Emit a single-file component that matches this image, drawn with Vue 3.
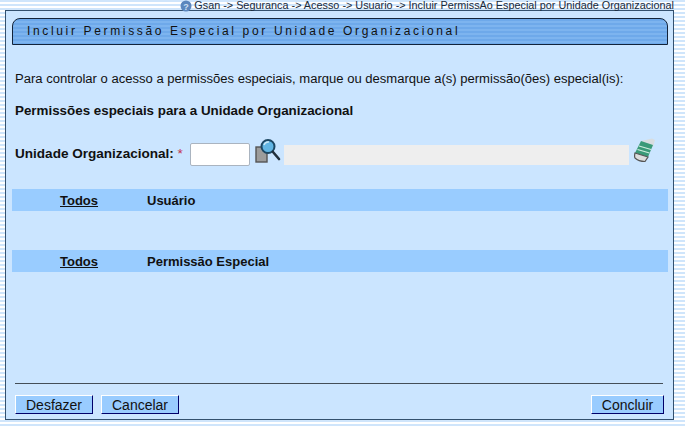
<script setup>
const headers = ['Usuário', 'Permissão Especial']
</script>

<template>
  <div class="page">
    <div class="crumbs">
      <svg class="help" width="12" height="12" viewBox="0 0 12 12">
        <circle cx="6" cy="6" r="5.500" fill="#5b87bd" />
        <text x="6" y="9.500" text-anchor="middle" class="q">?</text>
      </svg>
      <span>Gsan -&gt; Seguranca -&gt; Acesso -&gt; Usuario -&gt; Incluir PermissAo Especial por Unidade Organizacional</span>
    </div>
    <div class="panel">
      <div class="title">Incluir Permissão Especial por Unidade Organizacional</div>
      <p class="intro">Para controlar o acesso a permissões especiais, marque ou desmarque a(s) permissão(ões) especial(is):</p>
      <p class="subtitle">Permissões especiais para a Unidade Organizacional</p>
      <div class="field">
        <label class="label">Unidade Organizacional: <span class="star">*</span></label>
        <input class="code" type="text" />
        <svg class="lupa" width="26" height="26" viewBox="0 0 26 26">
          <rect x="1" y="9" width="11" height="15" fill="#9c9c9c" stroke="#555" stroke-width="1.400" />
          <circle cx="13" cy="8.500" r="6.500" fill="#62b6e4" stroke="#1d4763" stroke-width="2" />
          <path d="M9 7a4.500 4.500 0 0 1 5-3" fill="none" stroke="#cbe9f8" stroke-width="1.500" />
          <path d="M18 14l6 7" stroke="#22303c" stroke-width="2.600" stroke-linecap="round" />
        </svg>
        <div class="desc"></div>
        <svg class="eraser" width="22" height="25" viewBox="0 0 22 25">
          <path d="M7 3l11-2.500 3 1.500-2 7z" fill="#d8dde0" />
          <path d="M7 3l12 4-5 12-13-4z" fill="#3a9a78" />
          <path d="M5 8l12 3.500M3.500 11.500l12 3.500" stroke="#cfeede" stroke-width="1.300" />
          <path d="M1 15l13 4-3 4.500c-4 0-8-1.500-10-3.500-.5-1-.5-3 0-5z" fill="#ddd" stroke="#555" stroke-width="1.200" />
        </svg>
      </div>
      <div v-for="(h, i) in headers" :key="h" class="band" :class="{ second: i === 1 }">
        <a class="all">Todos</a>
        <span>{{ h }}</span>
      </div>
      <div class="spacer"></div>
      <hr class="rule" />
      <div class="actions">
        <button class="btn">Desfazer</button>
        <button class="btn">Cancelar</button>
        <button class="btn end">Concluir</button>
      </div>
    </div>
  </div>
</template>

<style scoped>
.page {
  width: 685px;
  height: 428px;
  overflow: hidden;
  font-family: "Liberation Sans", Arial, sans-serif;
  color: #111;
  background: repeating-linear-gradient(to bottom, #cfe5fb 0 2px, #fff 2px 4px);
}
.crumbs {
  height: 10px;
  display: flex;
  justify-content: flex-end;
  align-items: center;
  gap: 2px;
  padding-right: 11px;
  font-size: 10.830px;
  line-height: 10px;
  color: #1a2a3a;
  white-space: nowrap;
}
.help { flex: none; margin-top: 2px; }
.q { font: bold 9px "Liberation Sans", sans-serif; fill: #cfe0f2; }
.panel {
  box-sizing: border-box;
  width: 669px;
  height: 410px;
  margin-left: 5px;
  border: 1px solid #33506e;
  background: #cbe5ff;
  padding: 7px 5px 0 6px;
  display: flex;
  flex-direction: column;
}
.title {
  box-sizing: border-box;
  height: 27px;
  flex: none;
  padding-left: 14px;
  border: 1px solid #12233a;
  border-radius: 8px 8px 0 0;
  background: repeating-linear-gradient(to bottom, #6ea9ea 0 2px, #7db4ef 2px 4px);
  font-size: 12px;
  line-height: 25px;
  letter-spacing: 2.650px;
  color: #111;
  white-space: nowrap;
}
.intro, .subtitle {
  margin: 0;
  padding-left: 3px;
  line-height: 14px;
  white-space: nowrap;
}
.intro { margin-top: 27px; font-size: 13.060px; }
.subtitle { margin-top: 18px; font-weight: bold; font-size: 13.380px; }
.field {
  display: flex;
  align-items: center;
  height: 30px;
  margin-top: 21px;
  padding-left: 3px;
}
.label { width: 175px; margin-top: -2px; font-size: 13.550px; font-weight: bold; white-space: nowrap; }
.star { color: #c2304c; font-weight: normal; }
.code {
  box-sizing: border-box;
  width: 60px;
  height: 23px;
  margin: 1px 1px 0 0;
  border: 1px solid #aab4c0;
  border-radius: 2px;
  background: #fff;
}
.lupa { margin: -7px 0 0 4px; flex: none; }
.desc { width: 345px; height: 20px; margin: 2px 0 0 3px; background: #eee; }
.eraser { margin: -7px 0 0 5px; flex: none; }
.band {
  display: flex;
  height: 22px;
  flex: none;
  margin-top: 20px;
  background: #99ccff;
  font-size: 13px;
  font-weight: bold;
  line-height: 23px;
}
.band.second { margin-top: 39px; }
.all { width: 135px; padding-left: 48px; box-sizing: border-box; text-decoration: underline; }
.spacer { flex: 1; }
.rule {
  width: 648px;
  height: 1px;
  margin: 0 0 11px 3px;
  border: 0;
  background: #444e58;
}
.actions { display: flex; gap: 8px; padding: 0 4px 5px 3px; }
.btn {
  box-sizing: border-box;
  width: 78px;
  height: 19px;
  padding: 0;
  border: 1px solid;
  border-color: #fff #00006a #00006a #fff;
  background: #99ccff;
  font: 14px/16px "Liberation Sans", Arial, sans-serif;
  color: #111;
}
.btn.end { width: 73px; margin-left: auto; }
</style>
